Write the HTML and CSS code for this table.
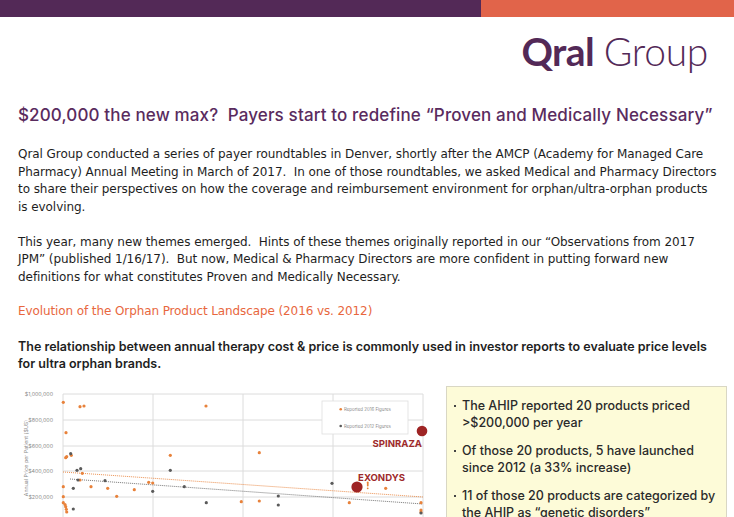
FILE: index.html
```html
<!DOCTYPE html>
<html lang="en">
<head>
<meta charset="utf-8">
<title>Qral Group – $200,000 the new max?</title>
<link rel="stylesheet" href="styles.css">
</head>
<body>
<div class="topbar"><div class="bar-purple"></div><div class="bar-orange"></div></div>
<header class="logo"><span class="logo-bold">Qral</span> <span class="logo-light">Group</span></header>
<main class="content">
  <h1 class="title">$200,000 the new max?&nbsp; Payers start to redefine “Proven and Medically Necessary”</h1>
  <p class="para para-first">Qral Group conducted a series of payer roundtables in Denver, shortly after the AMCP (Academy for Managed Care<br>
  Pharmacy) Annual Meeting in March of 2017.&nbsp; In one of those roundtables, we asked Medical and Pharmacy Directors<br>
  to share their perspectives on how the coverage and reimbursement environment for orphan/ultra-orphan products<br>
  is evolving.</p>
  <p class="para">This year, many new themes emerged.&nbsp; Hints of these themes originally reported in our “Observations from 2017<br>
  JPM” (published 1/16/17).&nbsp; But now, Medical &amp; Pharmacy Directors are more confident in putting forward new<br>
  definitions for what constitutes Proven and Medically Necessary.</p>
  <h2 class="section-title">Evolution of the Orphan Product Landscape (2016 vs. 2012)</h2>
  <p class="para para-strong">The relationship between annual therapy cost &amp; price is commonly used in investor reports to evaluate price levels<br>
  for ultra orphan brands.</p>
  <div class="bottom">
    <svg class="chart" width="440" height="150" viewBox="0 0 440 150" xmlns="http://www.w3.org/2000/svg">
      <g stroke="#dcdcdc" stroke-width="1">
        <line x1="63" y1="14" x2="423" y2="14"/>
        <line x1="63" y1="40" x2="423" y2="40"/>
        <line x1="63" y1="66" x2="423" y2="66"/>
        <line x1="63" y1="91" x2="423" y2="91"/>
        <line x1="63" y1="117" x2="423" y2="117"/>
        <line x1="63" y1="143" x2="423" y2="143"/>
        <line x1="63" y1="14" x2="63" y2="150"/>
        <line x1="153" y1="14" x2="153" y2="150"/>
        <line x1="243" y1="14" x2="243" y2="150"/>
        <line x1="333" y1="14" x2="333" y2="150"/>
        <line x1="423" y1="14" x2="423" y2="150"/>
      </g>
      <g class="axis-label" text-anchor="end">
        <text x="53" y="16">$1,000,000</text>
        <text x="53" y="42">$800,000</text>
        <text x="53" y="68">$600,000</text>
        <text x="53" y="93">$400,000</text>
        <text x="53" y="119">$200,000</text>
      </g>
      <text class="axis-label" text-anchor="middle" transform="translate(28 78) rotate(-90)">Annual Price per Patient ($US)</text>
      <line x1="63" y1="92" x2="423" y2="117" stroke="#e8823b" stroke-width="0.9" stroke-dasharray="1 1"/>
      <line x1="70" y1="99" x2="423" y2="124" stroke="#666" stroke-width="0.9" stroke-dasharray="1 1"/>
      <g fill="#e8823b">
        <circle cx="63.3" cy="22.3" r="1.6"/><circle cx="80" cy="26.7" r="1.6"/><circle cx="84" cy="26" r="1.6"/>
        <circle cx="206" cy="26" r="1.6"/><circle cx="66" cy="52.7" r="1.6"/><circle cx="65.7" cy="77.7" r="1.6"/>
        <circle cx="66.7" cy="76.7" r="1.6"/><circle cx="71.3" cy="75.3" r="1.6"/><circle cx="170.3" cy="75.3" r="1.6"/>
        <circle cx="259.3" cy="72.7" r="1.6"/><circle cx="82.3" cy="93.3" r="1.6"/><circle cx="80" cy="100" r="1.6"/>
        <circle cx="63.3" cy="106.7" r="1.6"/><circle cx="91" cy="106.7" r="1.6"/><circle cx="107.7" cy="108.3" r="1.6"/>
        <circle cx="134.3" cy="109.7" r="1.6"/><circle cx="116.7" cy="116.3" r="1.6"/><circle cx="148.7" cy="102.3" r="1.6"/>
        <circle cx="152.7" cy="103" r="1.6"/><circle cx="63.3" cy="116.7" r="1.6"/><circle cx="63.3" cy="122.7" r="1.6"/>
        <circle cx="65" cy="124.5" r="1.6"/><circle cx="65.7" cy="126.7" r="1.6"/><circle cx="66.3" cy="129.3" r="1.6"/>
        <circle cx="66.7" cy="132" r="1.6"/><circle cx="241.3" cy="121.7" r="1.6"/><circle cx="259.3" cy="121" r="1.6"/>
        <circle cx="349.3" cy="122.7" r="1.6"/><circle cx="385.7" cy="108.3" r="1.6"/><circle cx="421" cy="122.7" r="1.6"/>
        <circle cx="421" cy="130" r="1.6"/><circle cx="421" cy="132" r="1.6"/>
        <rect x="366.9" y="101.5" width="1.7" height="5" rx="0.8"/><circle cx="367.7" cy="108.3" r="0.9"/>
      </g>
      <g fill="#5a5a5a">
        <circle cx="70.7" cy="73.7" r="1.6"/><circle cx="77" cy="90.3" r="1.6"/><circle cx="80.7" cy="88.7" r="1.6"/>
        <circle cx="78" cy="100" r="1.6"/><circle cx="73.3" cy="108.3" r="1.6"/><circle cx="105" cy="100.7" r="1.6"/>
        <circle cx="170.3" cy="90.3" r="1.6"/><circle cx="152.7" cy="111.3" r="1.6"/><circle cx="184.3" cy="106.7" r="1.6"/>
        <circle cx="73.3" cy="129" r="1.6"/><circle cx="206.3" cy="122.7" r="1.6"/><circle cx="278.3" cy="116" r="1.6"/>
        <circle cx="278.3" cy="125" r="1.6"/><circle cx="332" cy="103.3" r="1.6"/><circle cx="421" cy="133" r="1.6"/>
      </g>
      <rect x="322" y="21" width="86" height="33" fill="#fff" stroke="#dedede" stroke-width="0.8"/>
      <circle cx="340.7" cy="29.3" r="1.3" fill="#e8823b"/>
      <circle cx="340.7" cy="46" r="1.3" fill="#5a5a5a"/>
      <text class="legend" x="344" y="31">Reported 2016 Figures</text>
      <text class="legend" x="344" y="47.6">Reported 2012 Figures</text>
      <circle cx="422" cy="51" r="5.3" fill="#9e2424"/>
      <text class="callout" x="422" y="66.5" text-anchor="end">SPINRAZA</text>
      <circle cx="357" cy="107" r="5.6" fill="#9e2424"/>
      <text class="callout" x="405" y="101" text-anchor="end">EXONDYS</text>
    </svg>
    <div class="facts">
      <ul class="fact-list">
        <li>The AHIP reported 20 products priced &gt;$200,000 per year</li>
        <li>Of those 20 products, 5 have launched since 2012 (a 33% increase)</li>
        <li>11 of those 20 products are categorized by the AHIP as “genetic disorders”</li>
      </ul>
    </div>
  </div>
</main>
</body>
</html>
```

FILE: styles.css
```css
html, body {
  margin: 0;
  padding: 0;
  background: #ffffff;
}

body {
  font-family: "DejaVu Sans", Inter, sans-serif;
  color: #1e1e1e;
  overflow: hidden;
}

.topbar {
  display: flex;
  height: 17px;
}

.bar-purple {
  width: 481px;
  background: #532957;
}

.bar-orange {
  flex: 1;
  background: #e1644a;
}

.logo {
  margin-top: 15px;
  height: 38px;
  line-height: 38px;
  font-family: Lato, sans-serif;
  font-size: 39px;
  color: #532957;
  text-align: right;
  padding-right: 26px;
  letter-spacing: -0.3px;
}

.logo-bold {
  font-weight: 700;
  letter-spacing: -0.6px;
}

.logo-light {
  font-weight: 300;
}

.content {
  padding: 0 2px 0 18px;
}

.title {
  margin: 33.5px 0 0;
  font-family: Inter, sans-serif;
  font-size: 17px;
  line-height: 22px;
  font-weight: 500;
  letter-spacing: 0.14px;
  color: #5a2b5e;
}

.para {
  margin: 17.5px 0 0;
  font-size: 12px;
  line-height: 17.5px;
  letter-spacing: -0.06px;
}

.para-first {
  margin-top: 20.6px;
}

.section-title {
  margin: 17px 0 0;
  font-size: 12px;
  line-height: 17.5px;
  font-weight: 400;
  letter-spacing: -0.1px;
  color: #e8673e;
}

.para-strong {
  font-family: Inter, sans-serif;
  font-size: 12.5px;
  font-weight: 600;
  line-height: 17px;
  letter-spacing: 0;
}

.bottom {
  display: flex;
  align-items: flex-start;
  margin: 8px 0 0 -18px;
}

.chart {
  display: block;
  flex: none;
}

.axis-label {
  font-family: Inter, sans-serif;
  font-size: 5.3px;
  fill: #8a8a8a;
}

.legend {
  font-family: Inter, sans-serif;
  font-size: 4.4px;
  fill: #8a8a8a;
}

.callout {
  font-family: Inter, sans-serif;
  font-size: 9.6px;
  font-weight: 700;
  fill: #9e2a2b;
}

.facts {
  margin: 6px 0 0 6px;
  width: 281px;
  height: 140px;
  background: #fdfbd8;
  border: 1px solid #d9d7c4;
  box-sizing: border-box;
}

.fact-list {
  list-style: none;
  margin: 0;
  padding: 9.5px 2px 0 7px;
}

.fact-list li {
  display: flex;
  align-items: baseline;
  gap: 6px;
  margin-bottom: 10px;
  font-family: Inter, sans-serif;
  font-size: 12.5px;
  line-height: 17.5px;
  font-weight: 500;
  color: #2a2a2a;
}

.fact-list li::before {
  content: "";
  flex: none;
  width: 2px;
  height: 2px;
  background: #444;
  position: relative;
  top: -3px;
}
```
